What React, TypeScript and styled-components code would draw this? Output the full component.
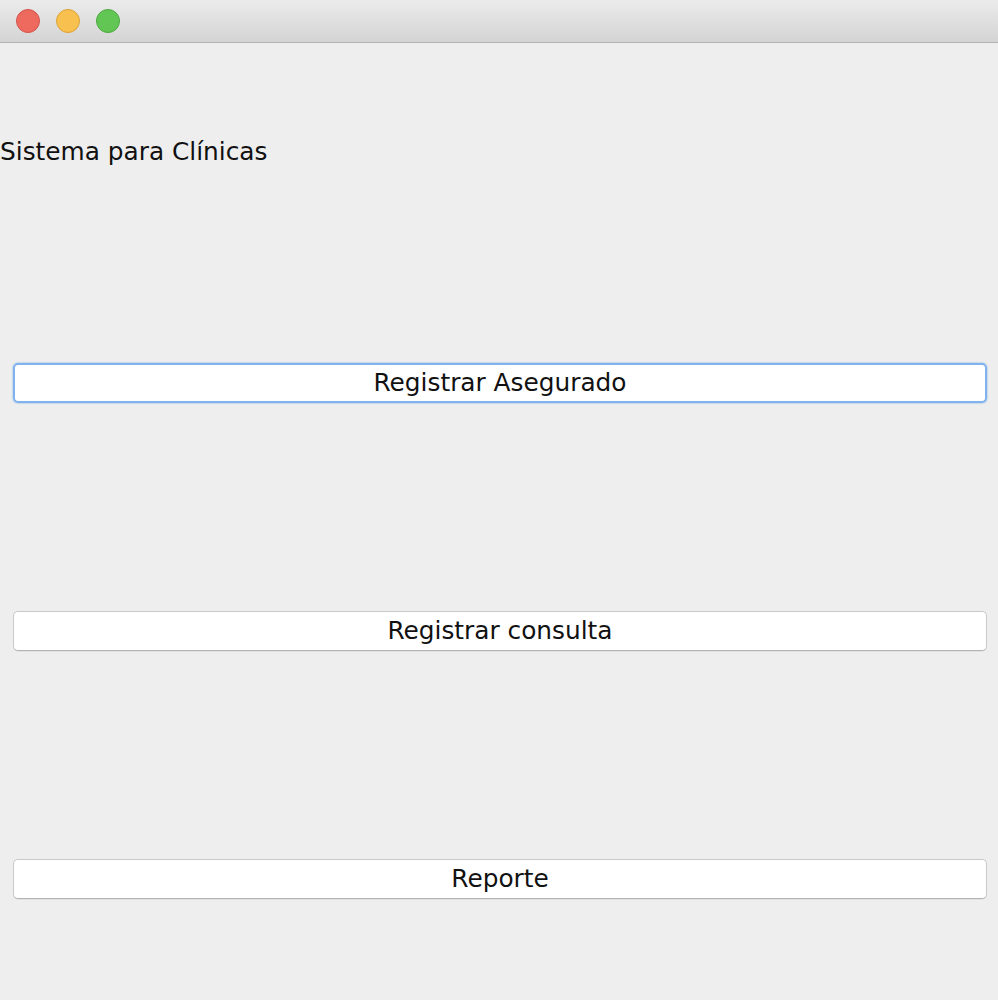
import React from "react";
import styled, { createGlobalStyle } from "styled-components";

const Global = createGlobalStyle`
  html, body { margin: 0; padding: 0; background: #eeeeee; }
  body { font-family: "DejaVu Sans", "Liberation Sans", sans-serif; }
`;

const Window = styled.div`
  width: 998px;
  height: 1000px;
  background: #eeeeee;
  display: flex;
  flex-direction: column;
  overflow: hidden;
`;

const TitleBar = styled.div`
  height: 42px;
  flex: none;
  display: flex;
  align-items: center;
  gap: 16px;
  padding-left: 16px;
  background: linear-gradient(#ebebeb, #d4d4d4);
  border-bottom: 1px solid #b1b1b1;
`;

const Light = styled.span<{ $fill: string; $edge: string }>`
  width: 22px;
  height: 22px;
  border-radius: 50%;
  background: ${(p) => p.$fill};
  border: 1px solid ${(p) => p.$edge};
`;

const Content = styled.div`
  display: flex;
  flex-direction: column;
  padding: 0 11px 0 13px;
`;

const Heading = styled.div`
  margin: 94px 0 0 -13px;
  height: 30px;
  line-height: 30px;
  font-size: 24.8px;
  color: #111;
`;

const Button = styled.button<{ $focused?: boolean; $top: number }>`
  margin-top: ${(p) => p.$top}px;
  height: 40px;
  width: 100%;
  border-radius: 5px;
  background: #ffffff;
  font-family: "DejaVu Sans", "Liberation Sans", sans-serif;
  font-size: 24.8px;
  line-height: 36px;
  color: #111;
  padding: 0;
  border: ${(p) => (p.$focused ? "2px solid #80b3eb" : "1px solid #c9c9c9")};
  border-bottom-color: ${(p) => (p.$focused ? "#80b3eb" : "#b3b3b3")};
  box-shadow: ${(p) => (p.$focused ? "0 0 1px 1px rgba(128,179,235,0.35)" : "0 1px 0 rgba(0,0,0,0.05)")};
`;

export default function App() {
  return (
    <>
      <Global />
      <Window>
        <TitleBar>
          <Light $fill="#ee6a5f" $edge="#d6534a" />
          <Light $fill="#f7c04f" $edge="#dea236" />
          <Light $fill="#62c655" $edge="#4ba83f" />
        </TitleBar>
        <Content>
          <Heading>Sistema para Clínicas</Heading>
          <Button $focused $top={196}>Registrar Asegurado</Button>
          <Button $top={208}>Registrar consulta</Button>
          <Button $top={208}>Reporte</Button>
        </Content>
      </Window>
    </>
  );
}
